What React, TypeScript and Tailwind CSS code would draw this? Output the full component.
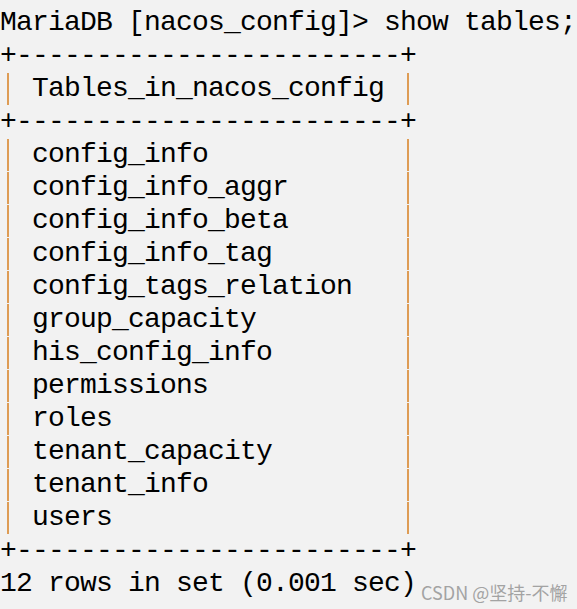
const tables = [
  'config_info',
  'config_info_aggr',
  'config_info_beta',
  'config_info_tag',
  'config_tags_relation',
  'group_capacity',
  'his_config_info',
  'permissions',
  'roles',
  'tenant_capacity',
  'tenant_info',
  'users',
]

const border = '+' + '-'.repeat(24) + '+'

function Pipe() {
  return (
    <span className="flex w-[16px] shrink-0 justify-center">
      <span className="my-auto h-[32px] w-[2px] bg-[#de9c55]" />
    </span>
  )
}

function Row({ text }: { text: string }) {
  return (
    <div className="flex h-[33px]">
      <Pipe />
      <span className="w-[16px] shrink-0" />
      <span className="w-[352px] shrink-0">{text}</span>
      <span className="w-[16px] shrink-0" />
      <Pipe />
    </div>
  )
}

export default function App() {
  return (
    <div className="h-[609px] w-[577px] overflow-hidden bg-[#f2f2f2] pt-[6px] font-['Liberation_Mono',monospace] text-[28px] leading-[33px] tracking-[-0.8px] whitespace-pre text-black">
      <div className="h-[33px]">MariaDB [nacos_config]&gt; show tables;</div>
      <div className="h-[33px]">{border}</div>
      <Row text="Tables_in_nacos_config" />
      <div className="h-[33px]">{border}</div>
      {tables.map((t) => (
        <Row key={t} text={t} />
      ))}
      <div className="h-[33px]">{border}</div>
      <div className="flex h-[33px]">
        <span>12 rows in set (0.001 sec)</span>
        <span className="mb-[-4px] ml-[5px] self-end font-['Noto_Sans_CJK_SC',sans-serif] text-[18px] leading-[24px] tracking-normal text-[#a3a3a3]">
          CSDN @坚持-不懈
        </span>
      </div>
    </div>
  )
}
